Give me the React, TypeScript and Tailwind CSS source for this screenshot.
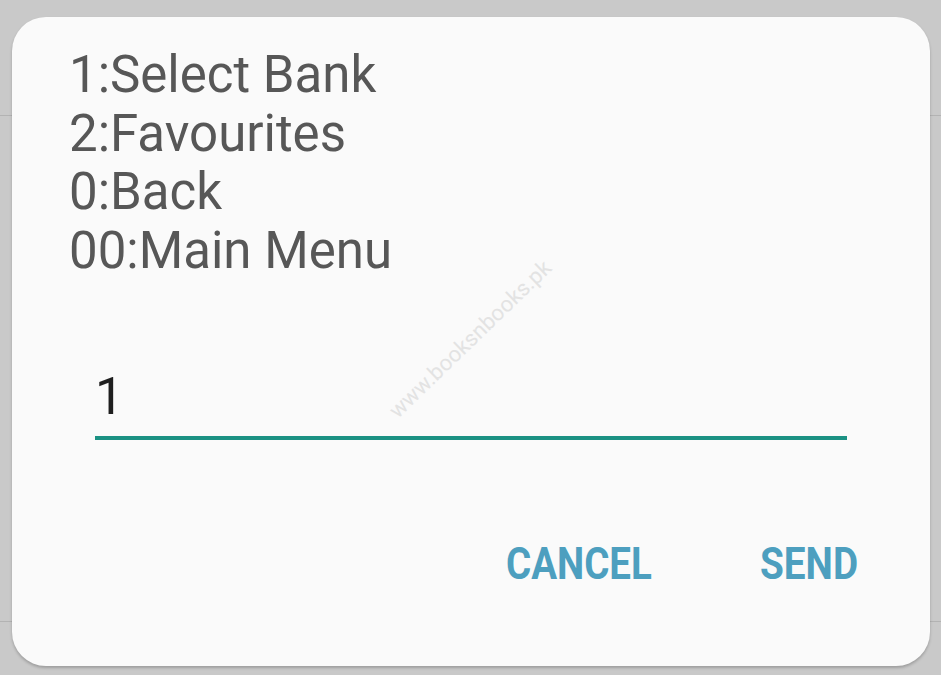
import React from "react";

export default function App() {
  return (
    <div
      className="relative w-[941px] h-[675px] overflow-hidden bg-[#c9c9c9]"
      style={{ fontFamily: "Roboto, 'Noto Sans', sans-serif" }}
    >
      {/* background list behind the dialog */}
      <div className="flex flex-col">
        <div className="h-[115px]" />
        <div className="h-px bg-[#b3b3b3]" />
        <div className="h-[505px]" />
        <div className="h-px bg-[#b3b3b3]" />
      </div>

      {/* dialog */}
      <div className="absolute left-[12px] top-[17px] w-[918px] h-[649px] rounded-[34px] bg-[#fafafa] shadow-[0_2px_3px_rgba(0,0,0,0.22)] flex flex-col">
        <div className="pl-[57px] pt-[29px] text-[51px] leading-[58.5px] text-[#575757]">
          <div>1:Select Bank</div>
          <div>2:Favourites</div>
          <div>0:Back</div>
          <div>00:Main Menu</div>
        </div>

        <div className="mx-[83px] mt-[88px]">
          <div className="pl-[0px] text-[51px] leading-[58.5px] text-[#1e1e1e]">1</div>
          <div className="mt-[9px] h-[4px] bg-[#1b9183]" />
        </div>

        <div className="mt-[101px] flex justify-end pr-[72px] text-[45px] leading-none font-bold text-[#4d9fbf]">
          <div className="w-[146px]">
            <span className="inline-block origin-left scale-x-[0.855]">CANCEL</span>
          </div>
          <div className="ml-[108px] w-[98px]">
            <span className="inline-block origin-left scale-x-[0.86]">SEND</span>
          </div>
        </div>

        <div className="pointer-events-none absolute left-[458px] top-[322px] -translate-x-1/2 -translate-y-1/2 -rotate-[44deg] whitespace-nowrap text-[22px] text-[#e3e3e3]">
          www.booksnbooks.pk
        </div>
      </div>
    </div>
  );
}
